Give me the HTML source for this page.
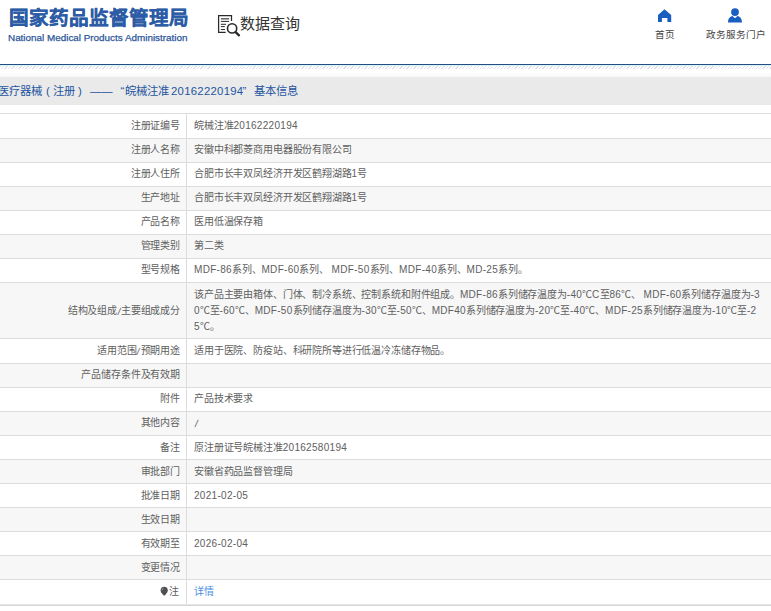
<!DOCTYPE html>
<html lang="zh-CN">
<head>
<meta charset="utf-8">
<style>
html,body{margin:0;padding:0;}
body{width:771px;height:611px;overflow:hidden;position:relative;background:#fff;font-family:"Liberation Sans",sans-serif;color:#555;}
.abs{position:absolute;white-space:nowrap;}
#logo1{left:9px;top:5px;font-size:19.6px;font-weight:bold;color:#2d5ca6;-webkit-text-stroke:0.3px #2d5ca6;line-height:26px;letter-spacing:0px;}
#logo2{left:8px;top:31.7px;font-size:9.9px;color:#2c5699;-webkit-text-stroke:0.25px #2c5699;line-height:12px;}
#sj{left:240px;top:13px;font-size:15px;color:#333;line-height:22px;}
#home{left:654.6px;top:28px;font-size:9.6px;color:#444;line-height:14px;}
#portal{left:705.6px;top:27.7px;font-size:9.6px;color:#444;line-height:14px;}
#bline{left:0;top:64px;width:771px;height:1px;background:#234f7e;}
#hatch1{left:0;top:65px;width:771px;height:1px;background:#d9f1fb;}
#hatch{left:0;top:66px;width:771px;height:3px;background:repeating-linear-gradient(135deg,rgba(150,160,170,0.3) 0 1px,transparent 1px 2.47px);}
#shade{left:0;top:72px;width:771px;height:5px;background:linear-gradient(#fff,#f8f8f8);}
#bar{left:0;top:77px;width:771px;height:28px;background:#eaeaea;}
.tt{top:0;font-size:11.3px;color:#1d55a0;line-height:28px;}
#tbl{left:0;top:113px;width:771px;}
.r{position:relative;border-top:1px solid #dcdcdc;height:23px;}
.r.g{background:#f7f7f7;}
.r .l{position:absolute;left:0;top:0;width:180px;height:100%;text-align:right;font-size:10px;letter-spacing:-0.15px;line-height:22px;color:#606060;}
.r .v{position:absolute;left:194px;top:0;height:100%;font-size:10px;letter-spacing:-0.15px;line-height:22px;color:#606060;white-space:nowrap;}
.n{letter-spacing:0.3px;}
.r.d .l,.r.d .v{top:1px;}
.sl{display:inline-block;transform:skewX(-10deg) translateY(0.5px);margin:0 0.6px;letter-spacing:0;}
.r .vl{position:absolute;left:186px;top:0;width:1px;height:100%;background:#dcdcdc;}
</style>
</head>
<body>
<div class="abs" id="logo1">国家药品监督管理局</div>
<div class="abs" id="logo2">National Medical Products Administration</div>
<svg class="abs" style="left:214px;top:11px" width="30" height="28" viewBox="0 0 30 28">
<path d="M11.7 21.4 H4.6 V4.6 H17.5 V9.9" fill="none" stroke="#2a2a2e" stroke-width="1.25"/>
<path d="M6.9 7.8 H15.1" stroke="#555" stroke-width="1.4"/>
<path d="M6.9 10.4 H15.1 M6.9 13.3 H12.1 M6.9 15.6 H10.8 M6.9 18.55 H11" stroke="#2a2a2e" stroke-width="1"/>
<circle cx="18.1" cy="17.4" r="4.6" fill="none" stroke="#2a2a2e" stroke-width="1.6"/>
<path d="M21.6 21.1 L25 24.3" stroke="#2a2a2e" stroke-width="2.3" stroke-linecap="round"/>
</svg>
<div class="abs" id="sj">数据查询</div>
<svg class="abs" style="left:656px;top:8px" width="18" height="16" viewBox="0 0 18 16">
<path d="M8.5 1.3 L15.2 6.9 V14 H11.4 V10.1 H5.9 V14 H2 V6.9 Z" fill="#1a5fc0"/>
</svg>
<div class="abs" id="home">首页</div>
<svg class="abs" style="left:726px;top:6px" width="18" height="18" viewBox="0 0 18 18">
<circle cx="9" cy="6.1" r="3.9" fill="#1a5fc0"/>
<path d="M2 16.6 C2 12.5 4 10.6 6.5 10 L9 12.3 L11.5 10 C14 10.6 16 12.5 16 16.6 Z" fill="#1a5fc0"/>
</svg>
<div class="abs" id="portal">政务服务门户</div>
<div class="abs" id="bline"></div>
<div class="abs" id="hatch1"></div>
<div class="abs" id="hatch"></div>
<div class="abs" id="shade"></div>
<div class="abs" id="bar"><div class="abs tt" style="left:-2px">医疗器械</div><div class="abs tt" style="left:46px">(</div><div class="abs tt" style="left:53px">注册</div><div class="abs tt" style="left:78px">)</div><div class="abs tt" style="left:90px">——</div><div class="abs tt" style="left:120.5px">“</div><div class="abs tt" style="left:125px">皖械注准</div><div class="abs tt" style="left:171px;letter-spacing:0.3px">20162220194</div><div class="abs tt" style="left:242.5px">”</div><div class="abs tt" style="left:253.5px">基本信息</div></div></div>
<div class="abs" id="tbl">
<div class="r" style="height:24px"><div class="l" style="line-height:23px">注册证编号</div><div class="vl"></div><div class="v" style="line-height:23px">皖械注准<span class="n">20162220194</span></div></div>
<div class="r g"><div class="l">注册人名称</div><div class="vl"></div><div class="v">安徽中科都菱商用电器股份有限公司</div></div>
<div class="r"><div class="l">注册人住所</div><div class="vl"></div><div class="v">合肥市长丰双凤经济开发区鹤翔湖路<span class="n">1</span>号</div></div>
<div class="r g"><div class="l">生产地址</div><div class="vl"></div><div class="v">合肥市长丰双凤经济开发区鹤翔湖路<span class="n">1</span>号</div></div>
<div class="r"><div class="l">产品名称</div><div class="vl"></div><div class="v">医用低温保存箱</div></div>
<div class="r g"><div class="l">管理类别</div><div class="vl"></div><div class="v">第二类</div></div>
<div class="r"><div class="l">型号规格</div><div class="vl"></div><div class="v"><span class="n">MDF-86</span>系列、<span class="n">MDF-60</span>系列、 <span class="n">MDF-50</span>系列、<span class="n">MDF-40</span>系列、<span class="n">MD-25</span>系列。</div></div>
<div class="r g" style="height:55px"><div class="l" style="line-height:55px">结构及组成<span class="sl">/</span>主要组成成分</div><div class="vl"></div><div class="v" style="line-height:15.8px;top:4.3px">该产品主要由箱体、门体、制冷系统、控制系统和附件组成。<span class="n">MDF-86</span>系列储存温度为<span class="n">-40</span>℃<span class="n">C</span>至<span class="n">86</span>℃、 <span class="n">MDF-60</span>系列储存温度为<span class="n">-3</span><br><span class="n">0</span>℃至<span class="n">-60</span>℃、<span class="n">MDF-50</span>系列储存温度为<span class="n">-30</span>℃至<span class="n">-50</span>℃、<span class="n">MDF40</span>系列储存温度为<span class="n">-20</span>℃至<span class="n">-40</span>℃、<span class="n">MDF-25</span>系列储存温度为<span class="n">-10</span>℃至<span class="n">-2</span><br><span class="n">5</span>℃。</div></div>
<div class="r" style="height:24px"><div class="l" style="line-height:23px">适用范围<span class="sl">/</span>预期用途</div><div class="vl"></div><div class="v" style="line-height:23px">适用于医院、防疫站、科研院所等进行低温冷冻储存物品。</div></div>
<div class="r g"><div class="l">产品储存条件及有效期</div><div class="vl"></div><div class="v"></div></div>
<div class="r"><div class="l">附件</div><div class="vl"></div><div class="v">产品技术要求</div></div>
<div class="r g"><div class="l">其他内容</div><div class="vl"></div><div class="v"><span class="sl" style="margin-left:0.5px">/</span></div></div>
<div class="r d"><div class="l">备注</div><div class="vl"></div><div class="v">原注册证号皖械注准<span class="n">20162580194</span></div></div>
<div class="r d g"><div class="l">审批部门</div><div class="vl"></div><div class="v">安徽省药品监督管理局</div></div>
<div class="r d"><div class="l">批准日期</div><div class="vl"></div><div class="v"><span class="n">2021-02-05</span></div></div>
<div class="r d g"><div class="l">生效日期</div><div class="vl"></div><div class="v"></div></div>
<div class="r d"><div class="l">有效期至</div><div class="vl"></div><div class="v"><span class="n">2026-02-04</span></div></div>
<div class="r d g"><div class="l">变更情况</div><div class="vl"></div><div class="v"></div></div>
<div class="r" style="height:24px;border-bottom:1px solid #e6e6e6"><div class="l" style="line-height:23px"><svg style="position:absolute;left:160px;top:6px" width="9" height="11" viewBox="0 0 9 11"><circle cx="4.2" cy="4.3" r="3.55" fill="#4f4f52"/><path d="M1.3 6.2 L3.5 9.6 H4.9 L7.1 6.2 Z" fill="#4f4f52"/><path d="M2.2 4.2 C2.2 3.2 2.8 2.4 3.6 2.2" stroke="#bbb" stroke-width="0.7" fill="none"/></svg><span style="margin-right:1px">注</span></div><div class="vl"></div><div class="v" style="line-height:24px;color:#4a8fe0">详情</div></div>
</div>
<div class="abs" style="left:0;top:605px;width:771px;height:1px;background:#d6d6d6"></div>
</body>
</html>
